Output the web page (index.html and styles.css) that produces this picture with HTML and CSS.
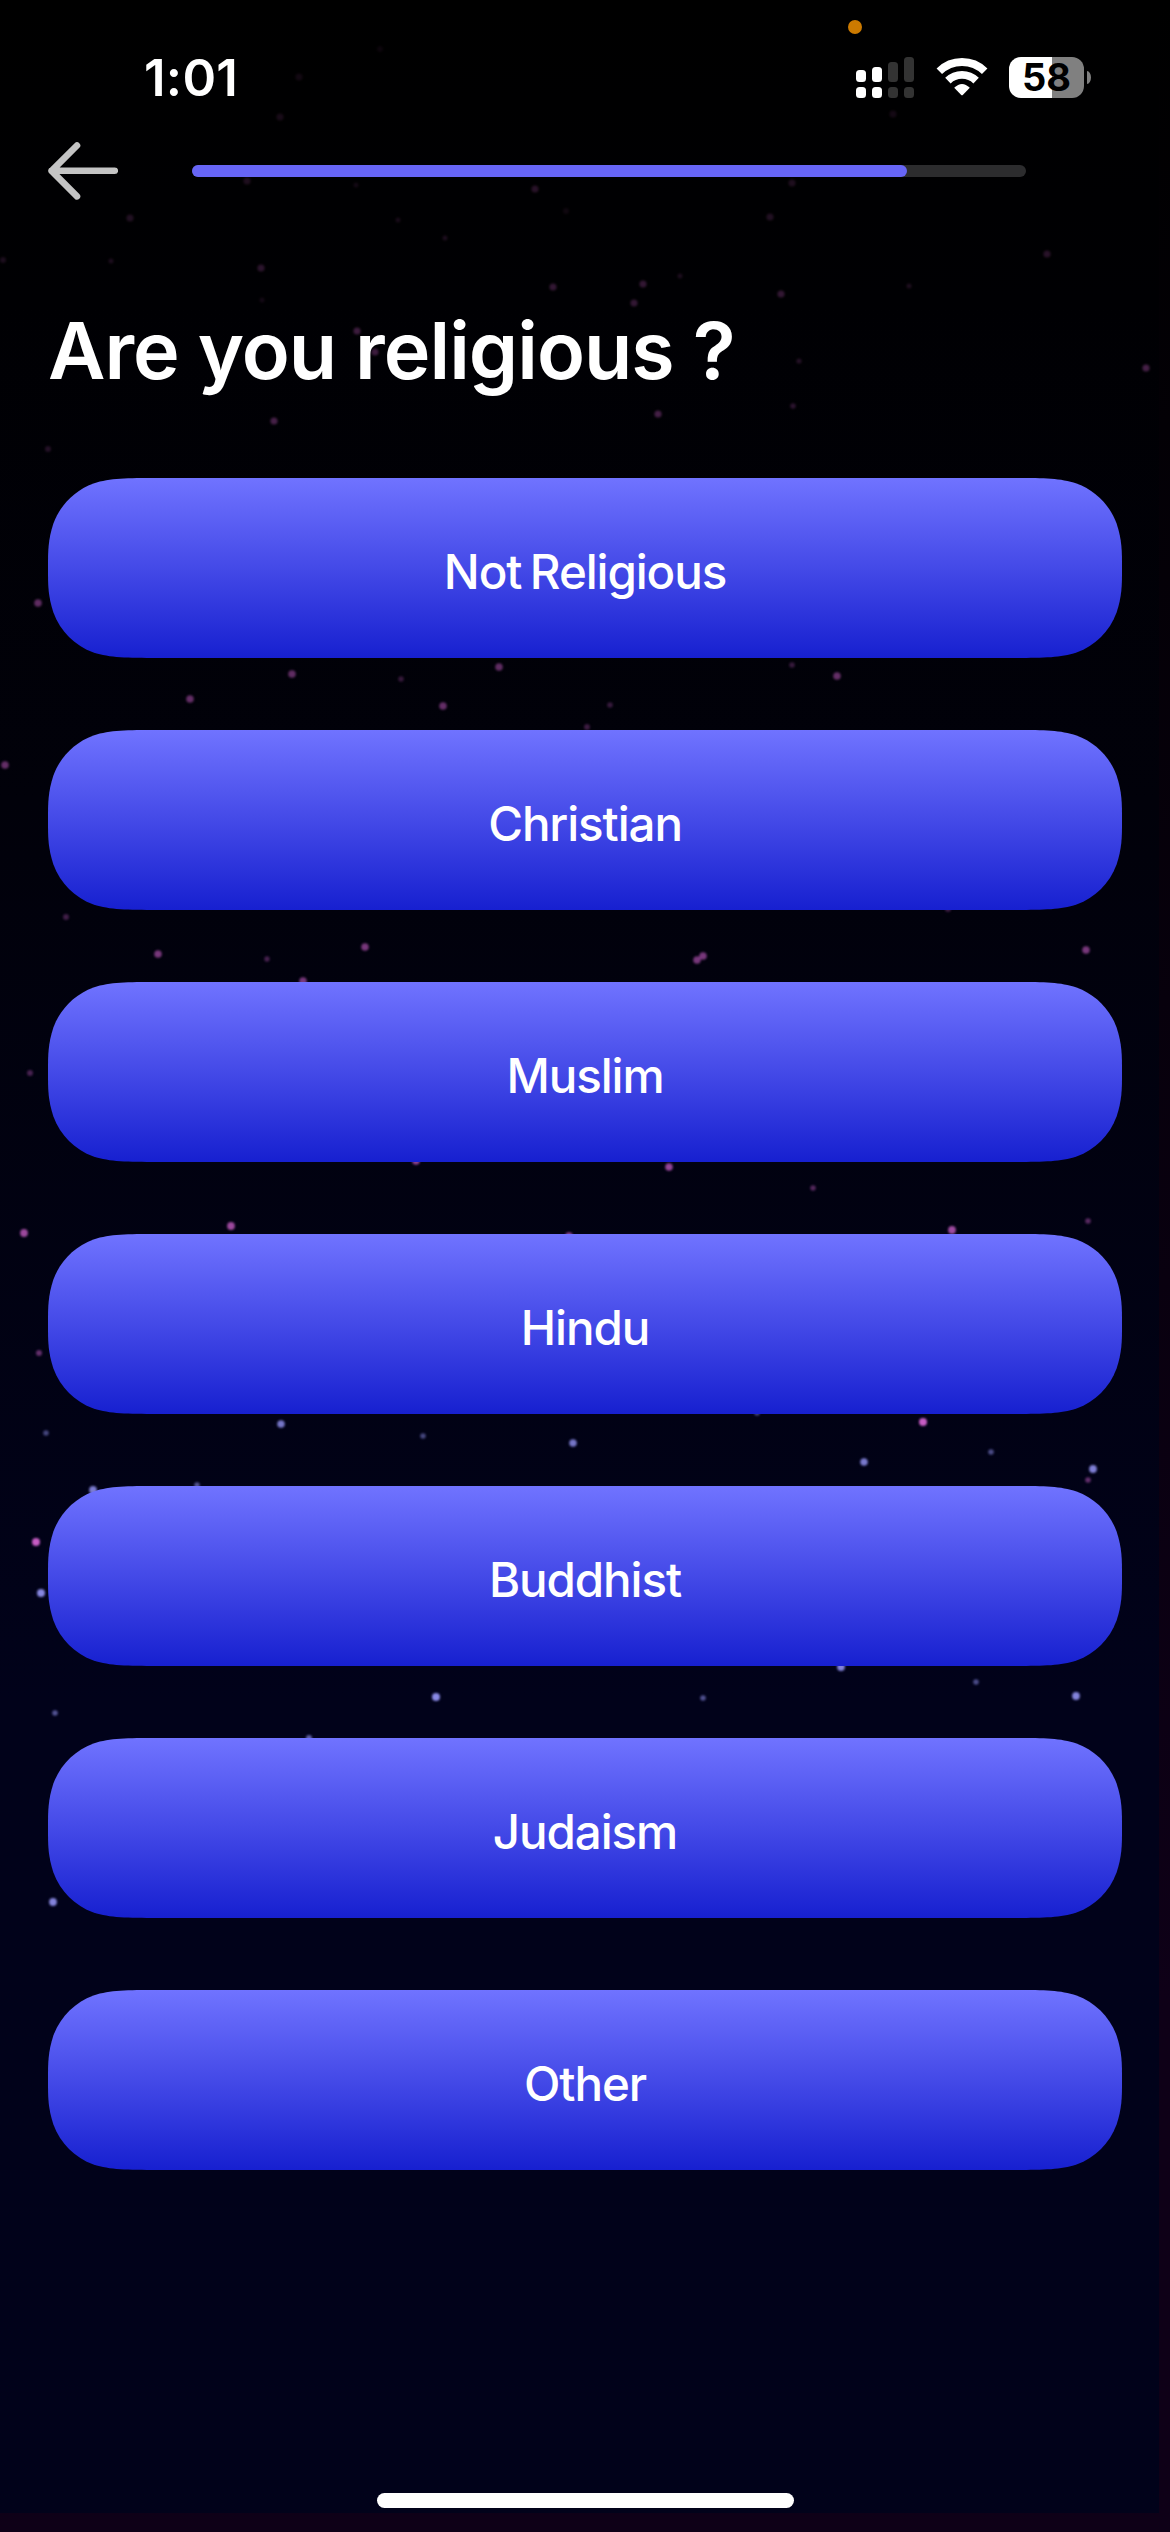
FILE: index.html
```html
<!DOCTYPE html>
<html lang="en">
<head>
<meta charset="utf-8">
<title>Are you religious ?</title>
<link rel="stylesheet" href="styles.css">
</head>
<body>
<div class="screen">
  <svg class="stars" id="stars" width="1170" height="2532" viewBox="0 0 1170 2532" aria-hidden="true"></svg>
  <span class="mic-dot"></span>

  <header class="status">
    <span class="time">1:01</span>
    <div class="status-icons">
      <svg class="signal" width="58" height="41" viewBox="0 0 58 41">
        <g fill="#fff">
          <rect x="0" y="13" width="10" height="12" rx="3.5"/><rect x="16" y="10" width="10" height="15" rx="3.5"/>
          <rect x="0" y="30" width="10" height="11" rx="3.5"/><rect x="16" y="30" width="10" height="11" rx="3.5"/>
        </g>
        <g fill="#333">
          <rect x="32" y="5" width="10" height="20" rx="3.5"/><rect x="48" y="0" width="10" height="25" rx="3.5"/>
          <rect x="32" y="30" width="10" height="11" rx="3.5"/><rect x="48" y="30" width="10" height="11" rx="3.5"/>
        </g>
      </svg>
      <svg class="wifi" width="52" height="38" viewBox="0 0 52 38">
        <g fill="none" stroke="#fff" stroke-width="7.8">
          <path d="M3.3 13.3 A32.4 32.4 0 0 1 48.7 13.3"/>
          <path d="M11.9 22.6 A20.2 20.2 0 0 1 40.1 22.6"/>
        </g>
        <path fill="#fff" d="M18.2 29.8 Q26 22.2 33.8 29.8 L27 36.8 Q26 37.8 25 36.8 Z"/>
      </svg>
      <div class="battery"><span class="battery-body">58</span><span class="battery-cap"></span></div>
    </div>
  </header>

  <nav class="topbar">
    <svg class="back" width="70" height="58" viewBox="0 0 70 58" fill="none" stroke="#c4c4c4" stroke-width="6.6" stroke-linecap="round" stroke-linejoin="round">
      <path d="M29 3.5 L3.6 28.8 L29 54.3 M3.6 28.8 H66.8"/>
    </svg>
    <div class="progress"><div class="progress-fill"></div></div>
  </nav>

  <main>
    <h1>Are you religious ?</h1>
    <div class="options">
      <button class="option">Not Religious</button>
      <button class="option">Christian</button>
      <button class="option">Muslim</button>
      <button class="option">Hindu</button>
      <button class="option">Buddhist</button>
      <button class="option">Judaism</button>
      <button class="option">Other</button>
    </div>
  </main>
  <div class="home-bar"></div>
</div>
<script src="stars.js"></script>
</body>
</html>
```
FILE: stars.js
```js
// Each star: x, y, radius, colour, opacity
const PINK = '#c65cc4';
const BLUE = '#8a8ae6';
const stars = [
  [130,218,3.6,PINK,.17],[247,181,3.6,PINK,.15],[280,117,3.6,PINK,.12],[299,77,3.6,PINK,.09],[380,49,3,PINK,.06],
  [356,185,2.5,PINK,.1],[535,189,3.6,PINK,.2],[566,211,3,PINK,.08],[792,183,3.6,PINK,.15],[893,114,3.6,PINK,.1],
  [770,217,3.6,PINK,.17],[398,220,2.5,PINK,.12],[445,238,2.5,PINK,.14],[1047,254,3.6,PINK,.2],[3,260,3,PINK,.14],
  [111,261,2.5,PINK,.14],[261,268,3.6,PINK,.22],[553,287,3.6,PINK,.25],[643,284,3.6,PINK,.25],[680,276,2.5,PINK,.14],
  [634,303,3.6,PINK,.25],[781,294,3.6,PINK,.25],[909,286,2.5,PINK,.15],[262,300,2.5,PINK,.1],[357,331,3.6,PINK,.3],
  [375,352,3.6,PINK,.3],[799,361,2.6,PINK,.18],[1146,368,3.6,PINK,.35],[793,406,2.8,PINK,.22],[658,414,3.6,PINK,.34],
  [274,421,3.6,PINK,.35],[48,449,3,PINK,.18],
  [38,603,3.8,PINK,.48],[292,674,3.8,PINK,.48],[499,667,3.8,PINK,.48],[401,679,2.8,PINK,.27],[190,699,3.8,PINK,.5],
  [443,706,3.8,PINK,.5],[610,705,2.8,PINK,.28],[792,665,2.8,PINK,.28],[837,676,3.8,PINK,.5],[587,727,3,PINK,.3],
  [5,765,3.8,PINK,.5],[66,917,3,PINK,.32],[158,954,3.8,PINK,.6],[365,947,3.8,PINK,.6],[267,959,2.7,PINK,.36],
  [303,981,3.8,PINK,.6],[697,960,3.8,PINK,.6],[703,956,3.8,PINK,.6],[1086,950,3.8,PINK,.6],[948,909,3,PINK,.3],
  [30,1073,3,PINK,.36],[416,1161,3.8,PINK,.7],[669,1167,3.8,PINK,.75],[813,1188,2.8,PINK,.42],[24,1233,3.9,PINK,.78],
  [231,1226,3.9,PINK,.78],[569,1236,3.8,PINK,.7],[952,1230,3.9,PINK,.8],[1088,1221,2.8,PINK,.45],[39,1353,3,PINK,.5],
  [923,1422,4,PINK,1],[281,1424,3.8,BLUE,.85],[46,1433,2.8,BLUE,.5],[423,1436,2.8,BLUE,.5],[573,1443,3.8,BLUE,.85],
  [757,1413,2.8,BLUE,.5],[864,1462,3.8,BLUE,.88],[991,1452,2.8,BLUE,.55],[1093,1469,3.9,BLUE,.92],[1088,1480,2.8,PINK,.5],
  [93,1490,3.9,BLUE,.9],[197,1485,2.8,BLUE,.6],[36,1542,4,PINK,1],[41,1593,4,BLUE,.98],[841,1667,3.9,BLUE,.95],
  [976,1682,2.8,BLUE,.55],[436,1697,4,BLUE,1],[703,1698,2.8,BLUE,.58],[1076,1696,3.9,BLUE,.95],[55,1713,2.8,BLUE,.6],
  [309,1738,3,BLUE,.7],[53,1902,3.9,BLUE,.95]
];
document.getElementById('stars').innerHTML = stars
  .map(([x, y, r, c, o]) => `<circle cx="${x}" cy="${y}" r="${r}" fill="${c}" opacity="${o}"/>`)
  .join('');
```
FILE: styles.css
```css
* { box-sizing: border-box; }

body {
  margin: 0;
  background: #000;
  font-family: Inter, "Liberation Sans", sans-serif;
  color: #fff;
}

.screen {
  position: relative;
  display: flex;
  flex-direction: column;
  width: 1170px;
  height: 2532px;
  overflow: hidden;
  background:
    linear-gradient(#0e0017, #0e0017) 0 100% / 100% 19px no-repeat,
    linear-gradient(#000, #07000c 1000px, #0e0017 2000px) 100% 0 / 11px 100% no-repeat,
    linear-gradient(#000 0, #000003 300px, #01010a 800px, #01021a 1700px, #01021a 100%);
}

.stars {
  position: absolute;
  inset: 0;
  filter: blur(1px);
}

.mic-dot {
  position: absolute;
  left: 848px;
  top: 20px;
  width: 14px;
  height: 14px;
  border-radius: 50%;
  background: #cc7a00;
}

.status {
  position: relative;
  display: flex;
  justify-content: space-between;
  height: 142px;
  padding: 57px 79px 0 144px;
}

.time {
  height: 42px;
  line-height: 42px;
  font-size: 51px;
  font-weight: 600;
  letter-spacing: 0.3px;
}

.status-icons {
  display: flex;
  align-items: flex-start;
}

.wifi { margin: 1px 0 0 22px; }

.battery {
  display: flex;
  align-items: center;
  gap: 3px;
  margin-left: 21px;
}

.battery-body {
  width: 75px;
  height: 41px;
  border-radius: 12px;
  background: linear-gradient(90deg, #fff 43px, #808080 43px);
  color: #000;
  font-size: 38px;
  font-weight: 700;
  line-height: 41px;
  text-align: center;
}

.battery-cap {
  width: 4px;
  height: 13px;
  border-radius: 0 4px 4px 0 / 0 6.5px 6.5px 0;
  background: #808080;
}

.topbar {
  position: relative;
  display: flex;
  align-items: center;
  gap: 74px;
  height: 58px;
  padding-left: 48px;
}

.progress {
  width: 834px;
  height: 12px;
  border-radius: 6px;
  background: #2c2c2e;
}

.progress-fill {
  width: 715px;
  height: 12px;
  border-radius: 6px;
  background: #6765f6;
}

main {
  position: relative;
  padding: 100px 48px 0;
}

h1 {
  height: 100px;
  margin: 0 0 78px;
  line-height: 100px;
  font-size: 79px;
  font-weight: 600;
  letter-spacing: -1px;
  white-space: nowrap;
}

.options {
  display: flex;
  flex-direction: column;
  gap: 72px;
}

.option {
  width: 1074px;
  height: 180px;
  padding: 6px 0 0;
  border: 0;
  background: linear-gradient(#7073ff, #1720d0);
  clip-path: path("M110 0 H964 C995.6 0 1011.5 0 1028.5 5.4 C1047.2 12.2 1061.8 26.8 1068.6 45.5 C1074 62.5 1074 72 1074 90 C1074 108 1074 117.5 1068.6 134.5 C1061.8 153.2 1047.2 167.8 1028.5 174.6 C1011.5 180 995.6 180 964 180 H110 C78.4 180 62.5 180 45.5 174.6 C26.8 167.8 12.2 153.2 5.4 134.5 C0 117.5 0 108 0 90 C0 72 0 62.5 5.4 45.5 C12.2 26.8 26.8 12.2 45.5 5.4 C62.5 0 78.4 0 110 0 Z");
  color: #fff;
  font: 500 47.5px Inter, "Liberation Sans", sans-serif;
  letter-spacing: -1.1px;
  word-spacing: -3px;
}

.home-bar {
  position: relative;
  width: 417px;
  height: 15px;
  margin: 323px auto 0;
  border-radius: 8px;
  background: #fff;
}
```
